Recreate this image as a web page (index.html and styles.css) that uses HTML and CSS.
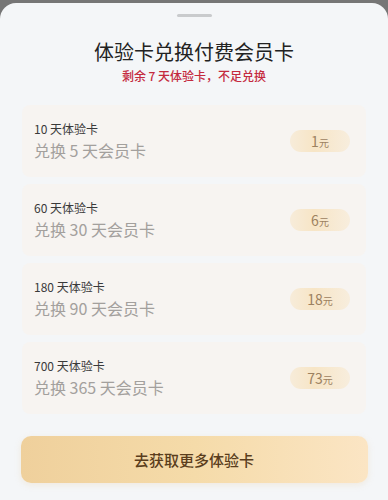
FILE: index.html
```html
<!DOCTYPE html>
<html lang="zh-CN">
<head>
<meta charset="utf-8">
<link rel="stylesheet" href="styles.css">
</head>
<body>
<div class="sheet">
  <div class="handle"></div>
  <h1 class="title">体验卡兑换付费会员卡</h1>
  <p class="notice">剩余 7 天体验卡，不足兑换</p>
  <div class="list">
    <div class="card">
      <div class="info">
        <div class="src">10 天体验卡</div>
        <div class="dst">兑换 5 天会员卡</div>
      </div>
      <div class="price">1<span class="unit">元</span></div>
    </div>
    <div class="card">
      <div class="info">
        <div class="src">60 天体验卡</div>
        <div class="dst">兑换 30 天会员卡</div>
      </div>
      <div class="price">6<span class="unit">元</span></div>
    </div>
    <div class="card">
      <div class="info">
        <div class="src">180 天体验卡</div>
        <div class="dst">兑换 90 天会员卡</div>
      </div>
      <div class="price">18<span class="unit">元</span></div>
    </div>
    <div class="card">
      <div class="info">
        <div class="src">700 天体验卡</div>
        <div class="dst">兑换 365 天会员卡</div>
      </div>
      <div class="price">73<span class="unit">元</span></div>
    </div>
  </div>
  <button class="cta">去获取更多体验卡</button>
</div>
</body>
</html>
```
FILE: styles.css
```css
html, body {
  margin: 0;
  padding: 0;
  background: #767676;
  font-family: "Noto Sans CJK SC", "Noto Sans", sans-serif;
}
.sheet {
  margin-top: 3px;
  height: 497px;
  box-sizing: border-box;
  background: #f4f6f8;
  border-radius: 16px 16px 0 0;
  padding: 11px 0 0;
  display: flex;
  flex-direction: column;
  align-items: center;
}
.handle {
  width: 35px;
  height: 3px;
  border-radius: 2px;
  background: #c9cbcd;
}
.title {
  margin: 21px 0 0;
  font-size: 20px;
  line-height: 28px;
  font-weight: 400;
  color: #222;
}
.notice {
  margin: 2px 0 0;
  font-size: 12px;
  line-height: 16px;
  font-weight: 500;
  color: #c42a3e;
}
.list {
  margin-top: 21px;
  width: 344px;
  display: flex;
  flex-direction: column;
  gap: 7px;
}
.card {
  height: 72px;
  box-sizing: border-box;
  background: #f7f4f1;
  border-radius: 8px;
  padding: 0 16px 0 12px;
  display: flex;
  align-items: center;
  justify-content: space-between;
}
.info {
  display: flex;
  flex-direction: column;
  gap: 3px;
  margin-top: -2px;
}
.src {
  font-size: 12px;
  line-height: 16px;
  color: #3a3a3a;
}
.dst {
  font-size: 16px;
  line-height: 20px;
  color: #a3a09d;
}
.price {
  width: 60px;
  height: 22px;
  border-radius: 11px;
  background: linear-gradient(90deg, rgba(247,226,190,0.45) 0%, #f7e5c6 40%, rgba(248,232,205,0.55) 100%);
  color: #9c8160;
  font-size: 14px;
  line-height: 22px;
  text-align: center;
}
.unit {
  font-size: 10px;
}
.cta {
  margin-top: 22px;
  width: 347px;
  height: 47px;
  border: none;
  border-radius: 10px;
  background: linear-gradient(90deg, #efd09c 0%, #f5dba9 50%, #fbe5c4 100%);
  color: #5a3d1c;
  font-family: "Noto Sans CJK SC", "Noto Sans", sans-serif;
  font-size: 15px;
  font-weight: 500;
  box-shadow: 0 2px 6px rgba(230,200,150,0.25);
}
```
